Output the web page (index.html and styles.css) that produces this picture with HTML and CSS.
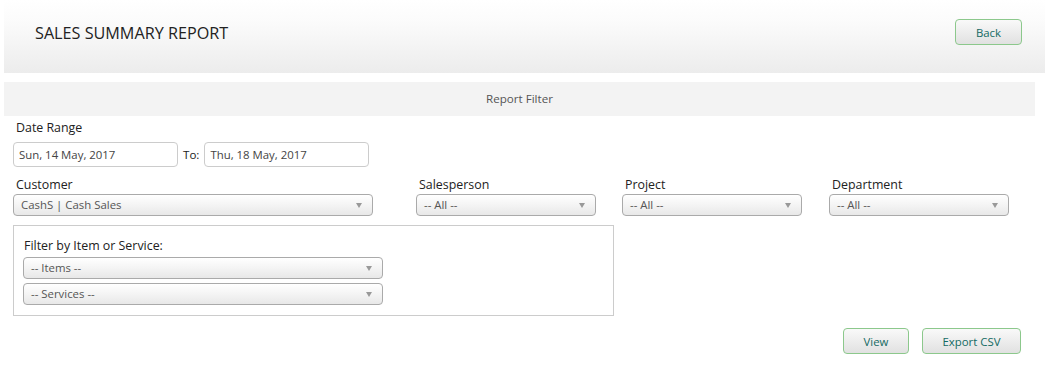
FILE: index.html
```html
<!DOCTYPE html>
<html lang="en">
<head>
    <meta charset="UTF-8">
    <title>Sales Summary Report</title>
    <link rel="stylesheet" href="styles.css">
</head>
<body>
    <div class="header">
        <h1>SALES SUMMARY REPORT</h1>
        <button class="btn btn-back">Back</button>
    </div>

    <div class="filter-bar">Report Filter</div>

    <div class="form">
        <label class="field-label">Date Range</label>
        <div class="date-row">
            <input class="input" type="text" value="Sun, 14 May, 2017">
            <span class="to">To:</span>
            <input class="input" type="text" value="Thu, 18 May, 2017">
        </div>

        <div class="select-row">
            <div class="field field-wide">
                <label class="field-label">Customer</label>
                <div class="select">CashS | Cash Sales</div>
            </div>
            <div class="field field-sales">
                <label class="field-label">Salesperson</label>
                <div class="select">-- All --</div>
            </div>
            <div class="field field-project">
                <label class="field-label">Project</label>
                <div class="select">-- All --</div>
            </div>
            <div class="field field-dept">
                <label class="field-label">Department</label>
                <div class="select">-- All --</div>
            </div>
        </div>

        <div class="item-box">
            <label class="field-label">Filter by Item or Service:</label>
            <div class="select">-- Items --</div>
            <div class="select">-- Services --</div>
        </div>

        <div class="actions">
            <button class="btn btn-view">View</button>
            <button class="btn btn-export">Export CSV</button>
        </div>
    </div>
</body>
</html>
```

FILE: styles.css
```css
body {
    margin: 0;
    padding: 0;
    font-family: 'Open Sans', 'Liberation Sans', sans-serif;
    background: #fff;
    color: #222;
}

.header {
    margin: 0 17px 0 4px;
    height: 73px;
    background: linear-gradient(to bottom, #fff 0%, #fbfbfb 30%, #ececec 100%);
    display: flex;
    justify-content: space-between;
    align-items: flex-start;
    box-sizing: border-box;
    padding: 0 23px 0 31px;
}

.header h1 {
    margin: 22px 0 0 0;
    font-size: 16.2px;
    font-weight: 400;
    color: #222;
    line-height: 22px;
}

.btn {
    font-family: inherit;
    font-size: 11.4px;
    color: #136a63;
    background: linear-gradient(to bottom, #f9f9f9, #e1e1e1);
    border: 1px solid #8cc88c;
    border-radius: 4px;
    height: 26px;
    padding: 0;
    cursor: pointer;
}

.btn-back {
    width: 67px;
    margin-top: 19px;
}

.filter-bar {
    margin: 9px 27px 0 4px;
    height: 34px;
    line-height: 34px;
    background: #f3f3f3;
    text-align: center;
    font-size: 11.6px;
    color: #555;
}

.form {
    padding: 0 21px 0 13px;
}

.field-label {
    display: block;
    font-size: 12.4px;
    color: #222;
    padding-left: 3px;
    line-height: 18px;
}

.form > .field-label {
    margin-top: 3px;
}

.date-row {
    display: flex;
    align-items: center;
    margin-top: 5px;
}

.input {
    width: 165px;
    height: 25px;
    box-sizing: border-box;
    border: 1px solid #ccc;
    border-radius: 4px;
    padding: 0 5px;
    font-family: inherit;
    font-size: 11.4px;
    color: #444;
    outline: none;
}

.to {
    font-size: 11.6px;
    color: #222;
    margin: 0 5px 0 5px;
}

.select-row {
    display: flex;
    margin-top: 9px;
}

.field-wide { width: 360px; margin-right: 43px; }
.field-sales { width: 180px; margin-right: 26px; }
.field-project { width: 180px; margin-right: 27px; }
.field-dept { width: 180px; }

.select {
    position: relative;
    height: 22px;
    line-height: 20px;
    box-sizing: border-box;
    border: 1px solid #aaa;
    border-radius: 4px;
    background: linear-gradient(to bottom, #fff 0%, #f4f4f4 50%, #e8e8e8 100%);
    font-size: 11.4px;
    color: #555;
    padding-left: 7px;
}

.select::after {
    content: "";
    position: absolute;
    right: 10px;
    top: 8px;
    border-left: 3px solid transparent;
    border-right: 3px solid transparent;
    border-top: 5px solid #999;
}

.item-box {
    width: 601px;
    height: 91px;
    box-sizing: border-box;
    border: 1px solid #ccc;
    margin-top: 9px;
    padding: 11px 9px 0 9px;
}

.item-box .field-label {
    padding-left: 1px;
    margin-bottom: 2px;
}

.item-box .select {
    width: 360px;
    margin-bottom: 4px;
}

.actions {
    display: flex;
    justify-content: flex-end;
    margin-top: 12px;
}

.btn-view {
    width: 66px;
    margin-right: 13px;
}

.btn-export {
    width: 99px;
    margin-right: 20px;
}
```
